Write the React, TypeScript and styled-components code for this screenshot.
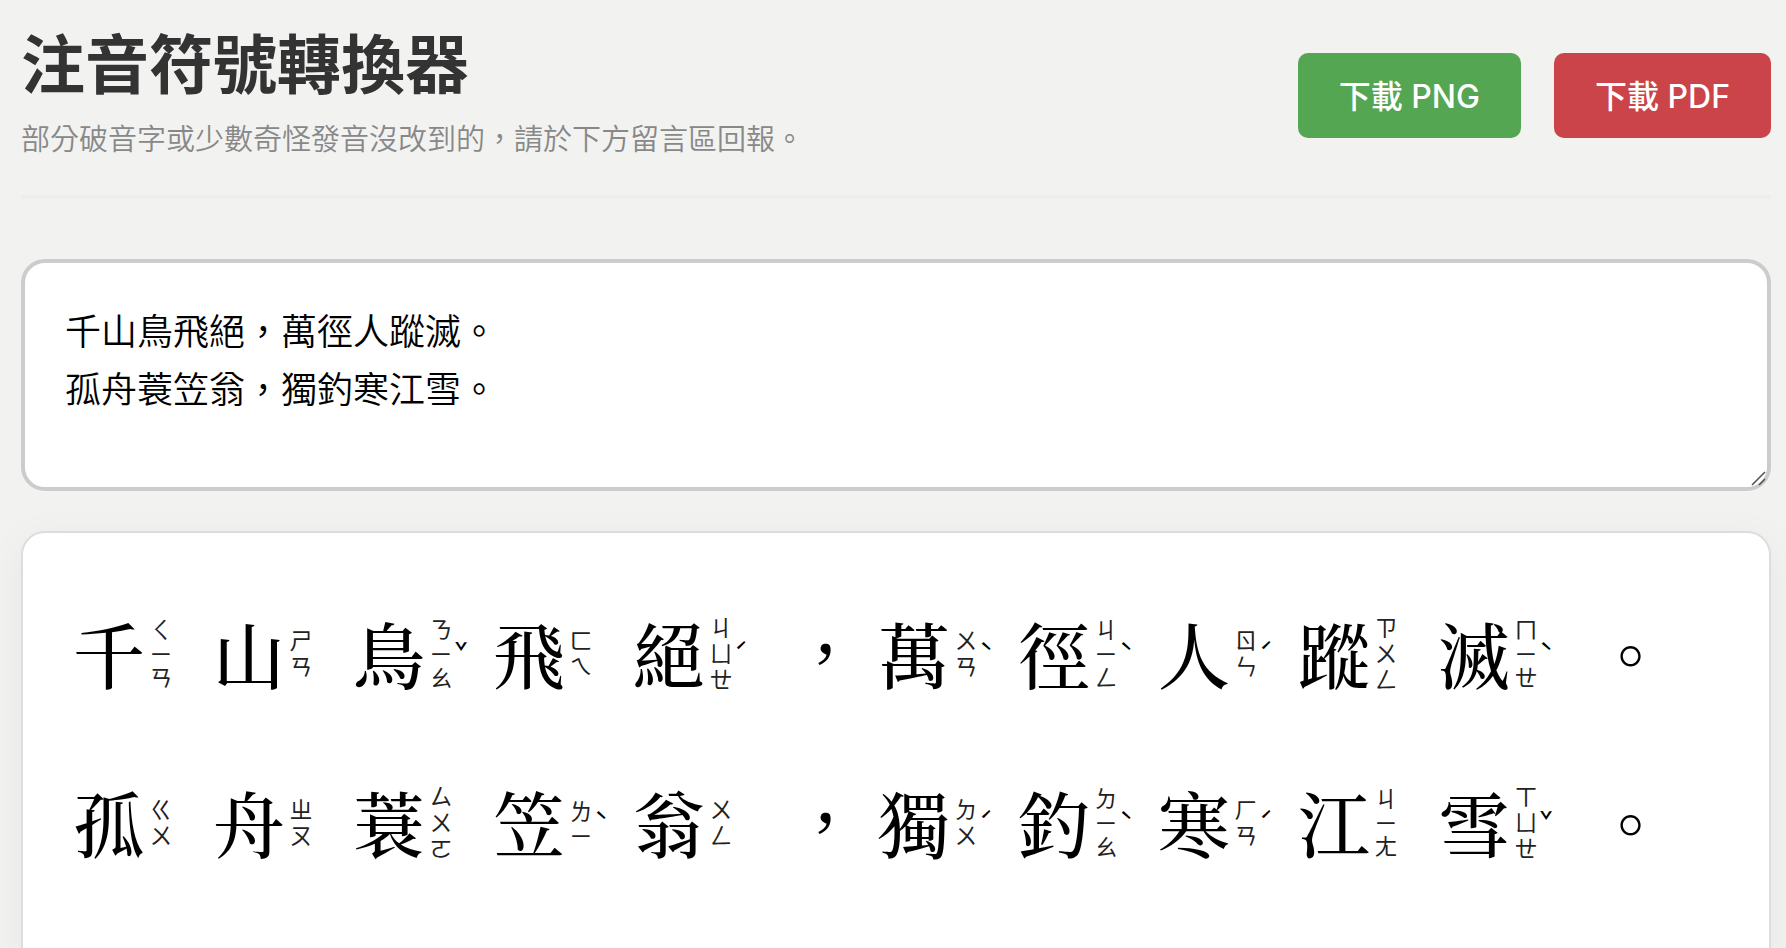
import React, { useState } from "react";
import styled, { createGlobalStyle } from "styled-components";

const sans = `"Liberation Sans", "Noto Sans CJK TC", sans-serif`;
const song = `"Noto Serif CJK TC", "Noto Sans CJK TC", serif`;

const GlobalStyle = createGlobalStyle`
  *, *::before, *::after { box-sizing: border-box; }
  body {
    margin: 0;
    background: #f2f2f0;
    font-family: ${sans};
  }
`;

const Page = styled.main`
  padding: 30px 15px 40px 21px;
`;

const Header = styled.header`
  display: flex;
  align-items: center;
  justify-content: space-between;
  gap: 32px;
  padding-bottom: 33px;
  margin-bottom: 60px;
  border-bottom: 4px solid #eeeeee;
`;

const Title = styled.h1`
  margin: 0 0 16px;
  font-size: 64px;
  line-height: 72px;
  font-weight: 600;
  color: #333;
`;

const Subtitle = styled.p`
  margin: 0;
  font-size: 29px;
  line-height: 44px;
  font-weight: 350;
  color: #888;
`;

const Actions = styled.div`
  display: flex;
  flex-shrink: 0;
  gap: 33px;
  padding-bottom: 2px;
`;

const DownloadButton = styled.button<{ $color: string }>`
  height: 85px;
  padding: 0 41px 3px;
  border: 0;
  border-radius: 10px;
  background: ${(p) => p.$color};
  color: #fff;
  font-family: Inter, "Noto Sans CJK TC", sans-serif;
  font-size: 32px;
  font-weight: 500;
  white-space: nowrap;
  cursor: pointer;
`;

const SourceBox = styled.div`
  position: relative;
`;

const SourceText = styled.textarea`
  display: block;
  width: 100%;
  height: 232px;
  padding: 41px 40px;
  border: 4px solid #ccc;
  border-radius: 24px;
  background: #fff;
  color: #000;
  font-family: ${sans};
  font-size: 36px;
  line-height: 58px;
  font-weight: 350;
  resize: vertical;
  outline: none;

  &::-webkit-resizer {
    background: transparent;
  }
`;

const Grip = styled.svg`
  position: absolute;
  right: 5px;
  bottom: 5px;
  width: 15px;
  height: 15px;
  pointer-events: none;
`;

const Card = styled.section`
  margin-top: 40px;
  padding: 34px 50px 90px;
  border: 2px solid #ddd;
  border-radius: 24px;
  background: #fff;
  box-shadow: 0 8px 40px rgba(0, 0, 0, 0.05);
`;

const Line = styled.div`
  display: flex;
  flex-wrap: wrap;
`;

const Cell = styled.div`
  display: flex;
  align-items: center;
  width: 140px;
  height: 169px;
`;

const Punctuation = styled(Cell)`
  justify-content: center;
  width: 105px;
`;

const Glyph = styled.span`
  font-family: ${song};
  font-size: 72px;
  line-height: 80px;
  font-weight: 500;
  color: #000;
`;

const Symbols = styled.span`
  display: flex;
  gap: 3px;
  width: 26px;
  margin-left: 3px;
  padding-top: 4px;
  writing-mode: vertical-rl;
  font-family: "Noto Sans CJK TC", sans-serif;
  font-size: 23px;
  line-height: 26px;
  font-weight: 400;
  color: #222;
`;

const Tone = styled.span`
  width: 14px;
  padding-bottom: 4px;
  font-family: "Noto Sans CJK TC", sans-serif;
  font-size: 22px;
  line-height: 26px;
  font-weight: 500;
  text-align: center;
  color: #000;
`;

const readings: Record<string, string> = {
  千: "ㄑㄧㄢ", 山: "ㄕㄢ", 鳥: "ㄋㄧㄠˇ", 飛: "ㄈㄟ", 絕: "ㄐㄩㄝˊ",
  萬: "ㄨㄢˋ", 徑: "ㄐㄧㄥˋ", 人: "ㄖㄣˊ", 蹤: "ㄗㄨㄥ", 滅: "ㄇㄧㄝˋ",
  孤: "ㄍㄨ", 舟: "ㄓㄡ", 蓑: "ㄙㄨㄛ", 笠: "ㄌㄧˋ", 翁: "ㄨㄥ",
  獨: "ㄉㄨˊ", 釣: "ㄉㄧㄠˋ", 寒: "ㄏㄢˊ", 江: "ㄐㄧㄤ", 雪: "ㄒㄩㄝˇ",
};

const toneMarks = "ˊˇˋ˙";

function Character({ char }: { char: string }) {
  const reading = readings[char];
  if (!reading) {
    return (
      <Punctuation>
        <Glyph>{char}</Glyph>
      </Punctuation>
    );
  }
  const parts = Array.from(reading);
  const tone = parts.find((p) => toneMarks.includes(p));
  return (
    <Cell>
      <Glyph>{char}</Glyph>
      <Symbols>
        {parts
          .filter((p) => !toneMarks.includes(p))
          .map((p, i) => (
            <span key={i}>{p}</span>
          ))}
      </Symbols>
      {tone && <Tone>{tone}</Tone>}
    </Cell>
  );
}

export default function App() {
  const [text, setText] = useState(
    "千山鳥飛絕，萬徑人蹤滅。\n孤舟蓑笠翁，獨釣寒江雪。"
  );

  return (
    <Page lang="zh-Hant">
      <GlobalStyle />
      <Header>
        <div>
          <Title>注音符號轉換器</Title>
          <Subtitle>
            部分破音字或少數奇怪發音沒改到的，請於下方留言區回報。
          </Subtitle>
        </div>
        <Actions>
          <DownloadButton type="button" $color="#54a653">下載 PNG</DownloadButton>
          <DownloadButton type="button" $color="#cb4449">下載 PDF</DownloadButton>
        </Actions>
      </Header>
      <SourceBox>
        <SourceText
          aria-label="輸入文字"
          spellCheck={false}
          value={text}
          onChange={(e) => setText(e.target.value)}
        />
        <Grip viewBox="0 0 15 15" stroke="#555" strokeWidth="1.6" aria-hidden="true">
          <path d="M1 14 14 1M8 14l6-6" />
        </Grip>
      </SourceBox>
      <Card aria-label="注音結果">
        {text.split("\n").map((line, i) => (
          <Line key={i}>
            {Array.from(line).map((char, j) => (
              <Character key={j} char={char} />
            ))}
          </Line>
        ))}
      </Card>
    </Page>
  );
}
